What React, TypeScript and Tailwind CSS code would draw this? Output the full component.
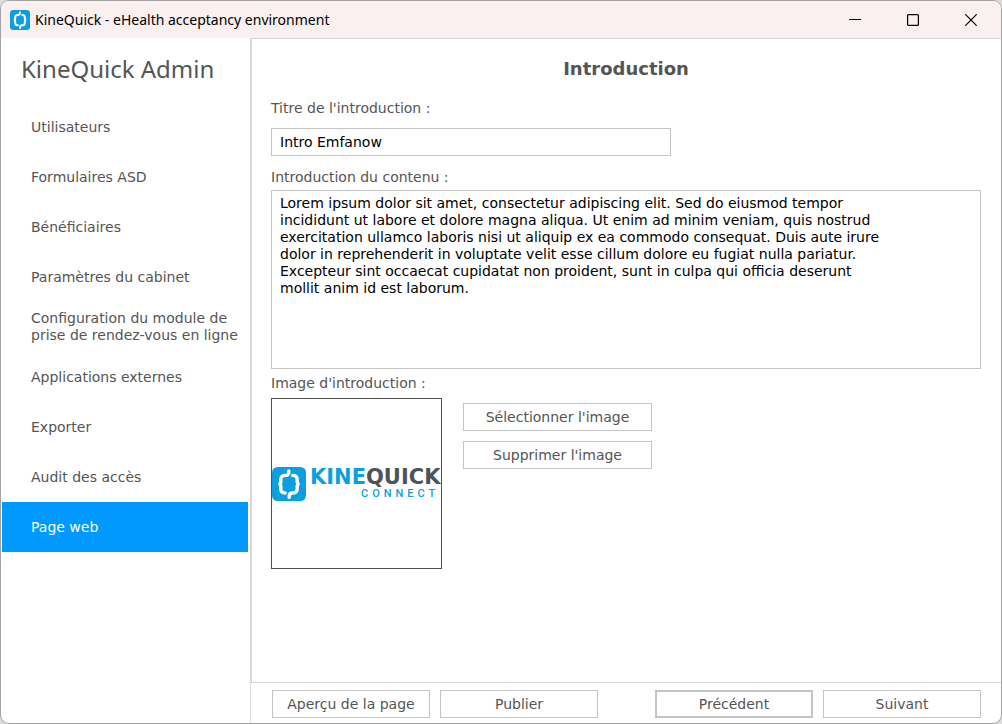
import { useState, type ButtonHTMLAttributes } from "react";

const NAV_ITEMS = [
  "Utilisateurs",
  "Formulaires ASD",
  "Bénéficiaires",
  "Paramètres du cabinet",
  "Configuration du module de prise de rendez-vous en ligne",
  "Applications externes",
  "Exporter",
  "Audit des accès",
  "Page web",
];

const LOREM = `Lorem ipsum dolor sit amet, consectetur adipiscing elit. Sed do eiusmod tempor
incididunt ut labore et dolore magna aliqua. Ut enim ad minim veniam, quis nostrud
exercitation ullamco laboris nisi ut aliquip ex ea commodo consequat. Duis aute irure
dolor in reprehenderit in voluptate velit esse cillum dolore eu fugiat nulla pariatur.
Excepteur sint occaecat cupidatat non proident, sunt in culpa qui officia deserunt
mollit anim id est laborum.`;

function LogoMark({ className }: { className: string }) {
  return (
    <svg viewBox="0 0 34 34" className={className} aria-hidden="true">
      <rect width="34" height="34" rx="5.5" fill="#0c9fe0" />
      <g fill="none" stroke="#fff" strokeWidth="3.4" strokeLinecap="round" strokeLinejoin="round">
        <path d="M16.8 4v1.2c0 2.2-1.2 3.2-3.4 3.2-3 0-4.6 1.4-4.6 4v3l-1 1.8 1 1.8v3c0 2.6 1.4 4 4.4 4" />
        <path d="M17.2 30.4v-1.2c0-2.2 1.2-3.2 3.4-3.2 3 0 4.6-1.4 4.6-4v-3l1-1.8-1-1.8v-3c0-2.6-1.4-4-4.4-4" />
      </g>
    </svg>
  );
}

function TitleBar() {
  return (
    <header className="flex h-[37px] shrink-0 items-center bg-[#f9f0ef] pl-[9px]">
      <LogoMark className="size-5" />
      <span className="ml-[5px] font-['Noto_Sans',sans-serif] text-sm text-black">
        KineQuick - eHealth acceptancy environment
      </span>
      <div className="ml-auto flex h-full pr-px">
        <button aria-label="Réduire" className="flex w-[58px] items-center justify-center">
          <svg viewBox="0 0 12 12" className="size-3" stroke="#000" strokeWidth="1.1">
            <path d="M0 5.5h12" />
          </svg>
        </button>
        <button aria-label="Agrandir" className="flex w-[58px] items-center justify-center">
          <svg viewBox="0 0 12 12" className="size-3" fill="none" stroke="#000" strokeWidth="1.2">
            <rect x="0.6" y="0.6" width="10.8" height="10.8" rx="1" />
          </svg>
        </button>
        <button aria-label="Fermer" className="flex w-[58px] items-center justify-center">
          <svg viewBox="0 0 12 12" className="size-3" stroke="#000" strokeWidth="1.2">
            <path d="M0.3 0.3l11.4 11.4M11.7 0.3L0.3 11.7" />
          </svg>
        </button>
      </div>
    </header>
  );
}

function Sidebar({ active, onSelect }: { active: string; onSelect: (item: string) => void }) {
  return (
    <aside className="w-[249px] shrink-0 pr-[2px] pl-px">
      <h1 className="px-[19px] pt-[15px] pb-[17px] font-['Noto_Sans',sans-serif] text-2xl leading-8">
        KineQuick Admin
      </h1>
      <nav>
        {NAV_ITEMS.map((item) => (
          <button
            key={item}
            onClick={() => onSelect(item)}
            className={`flex h-[50px] w-full items-center pl-[29px] text-left leading-[17px] ${
              item === active ? "bg-[#0099ff] text-white" : ""
            }`}
          >
            {item}
          </button>
        ))}
      </nav>
    </aside>
  );
}

function OutlineButton({ className = "", ...props }: ButtonHTMLAttributes<HTMLButtonElement>) {
  return (
    <button
      {...props}
      className={`h-7 border-[#c4c4c4] bg-white text-center leading-5 ${className}`}
    />
  );
}

function ImagePreview() {
  return (
    <div className="flex size-[171px] shrink-0 items-center overflow-hidden border border-[#505050]">
      <LogoMark className="size-[34px] shrink-0" />
      <div className="ml-1 shrink-0 pb-[2px]">
        <p className="text-[21px] leading-[22px] font-bold text-[#4d5358]">
          <span className="text-[#0c9fe0]">KINE</span>QUICK
        </p>
        <p className="pl-[51px] font-['Roboto',sans-serif] text-[11px] leading-3 font-medium tracking-[4px] text-[#0c9fe0]">
          CONNECT
        </p>
      </div>
    </div>
  );
}

export default function App() {
  const [active, setActive] = useState("Page web");
  const [title, setTitle] = useState("Intro Emfanow");
  const [content, setContent] = useState(LOREM);

  return (
    <div className="min-h-screen bg-[#dcdcdc] font-['DejaVu_Sans',sans-serif] text-sm text-[#555555]">
      <div className="flex min-h-screen flex-col overflow-hidden rounded-[9px] border border-[#a3a3a3] bg-white">
        <TitleBar />
        <div className="flex grow">
          <Sidebar active={active} onSelect={setActive} />
          <div className="flex min-w-0 grow flex-col border-l border-[#dcdcdc]">
            <main className="grow border-t border-l border-[#d4d4d4] pt-[18px] pr-5 pl-[19px]">
              <h2 className="text-center text-lg leading-6 font-bold">Introduction</h2>

              <label htmlFor="intro-title" className="mt-[17px] block leading-5">
                Titre de l'introduction :
              </label>
              <input
                id="intro-title"
                value={title}
                onChange={(e) => setTitle(e.target.value)}
                className="mt-[10px] block h-7 w-[400px] border border-[#c4c4c4] px-2 text-black"
              />

              <label htmlFor="intro-content" className="mt-[11px] block leading-5">
                Introduction du contenu :
              </label>
              <textarea
                id="intro-content"
                value={content}
                onChange={(e) => setContent(e.target.value)}
                className="mt-[3px] block h-[179px] w-full resize-none border border-[#c4c4c4] px-2 py-1 leading-[17px] text-black"
              />

              <p className="mt-1 leading-5">Image d'introduction :</p>
              <div className="mt-[5px] flex gap-[21px]">
                <ImagePreview />
                <div className="flex w-[189px] flex-col gap-[10px] pt-[5px]">
                  <OutlineButton className="border">Sélectionner l'image</OutlineButton>
                  <OutlineButton className="border">Supprimer l'image</OutlineButton>
                </div>
              </div>
            </main>

            <footer className="flex shrink-0 gap-[10px] border-t border-[#d4d4d4] pt-[7px] pr-5 pb-[5px] pl-[21px]">
              <OutlineButton className="w-[158px] border">Aperçu de la page</OutlineButton>
              <OutlineButton className="w-[158px] border">Publier</OutlineButton>
              <OutlineButton className="ml-auto w-[158px] border-2">Précédent</OutlineButton>
              <OutlineButton className="w-[158px] border">Suivant</OutlineButton>
            </footer>
          </div>
        </div>
      </div>
    </div>
  );
}
